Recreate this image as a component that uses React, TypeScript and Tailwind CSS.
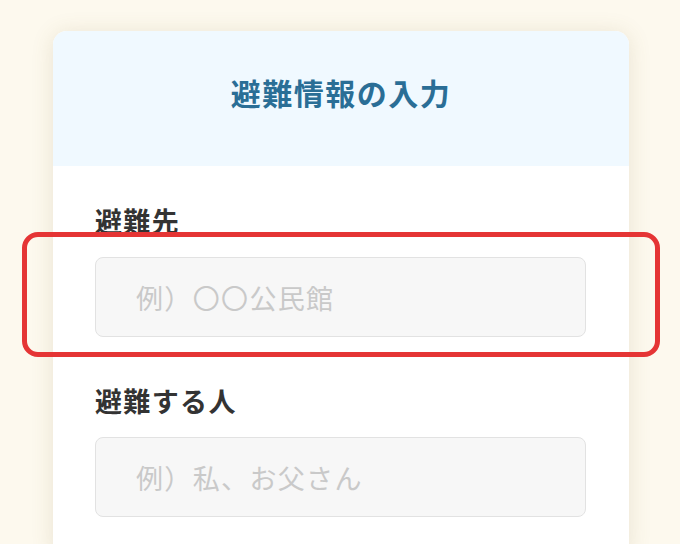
import React from "react";

const fields = [
  { label: "避難先", placeholder: "例）〇〇公民館" },
  { label: "避難する人", placeholder: "例）私、お父さん" },
];

export default function App() {
  return (
    <div
      className="relative h-[544px] overflow-hidden bg-[#fdf9ee] pt-[31px]"
      style={{ fontFamily: '"Noto Sans CJK JP", "Noto Sans", sans-serif' }}
    >
      {/* Card */}
      <div className="ml-[53px] w-[576px] overflow-hidden rounded-[14px] bg-white shadow-[0_2px_22px_rgba(130,110,60,0.16)]">
        <div className="h-[135px] bg-[#f0f9ff] pt-[41px] text-center">
          <h1 className="text-[30px] font-bold leading-[40px] tracking-[0.05em] text-[#2a6e96]">
            避難情報の入力
          </h1>
        </div>

        <div className="flex flex-col gap-[44px] pb-[40px] pl-[42px] pr-[43px] pt-[35px]">
          {fields.map((f) => (
            <div key={f.label}>
              <p className="mb-4 text-[27px] font-bold leading-[40px] tracking-[0.05em] text-[#333333]">
                {f.label}
              </p>
              <input
                type="text"
                placeholder={f.placeholder}
                className="h-[80px] w-full rounded-[8px] border border-[#e2e2e2] bg-[#f7f7f7] pl-[40px] text-[27px] tracking-[0.05em] text-[#333333] outline-none placeholder:text-[#c9c9c9]"
              />
            </div>
          ))}
        </div>
      </div>

      {/* Highlight annotation */}
      <div className="pointer-events-none absolute left-[22px] top-[232px] h-[125px] w-[638px] rounded-[16px] border-[5px] border-[#e53535]" />
    </div>
  );
}
